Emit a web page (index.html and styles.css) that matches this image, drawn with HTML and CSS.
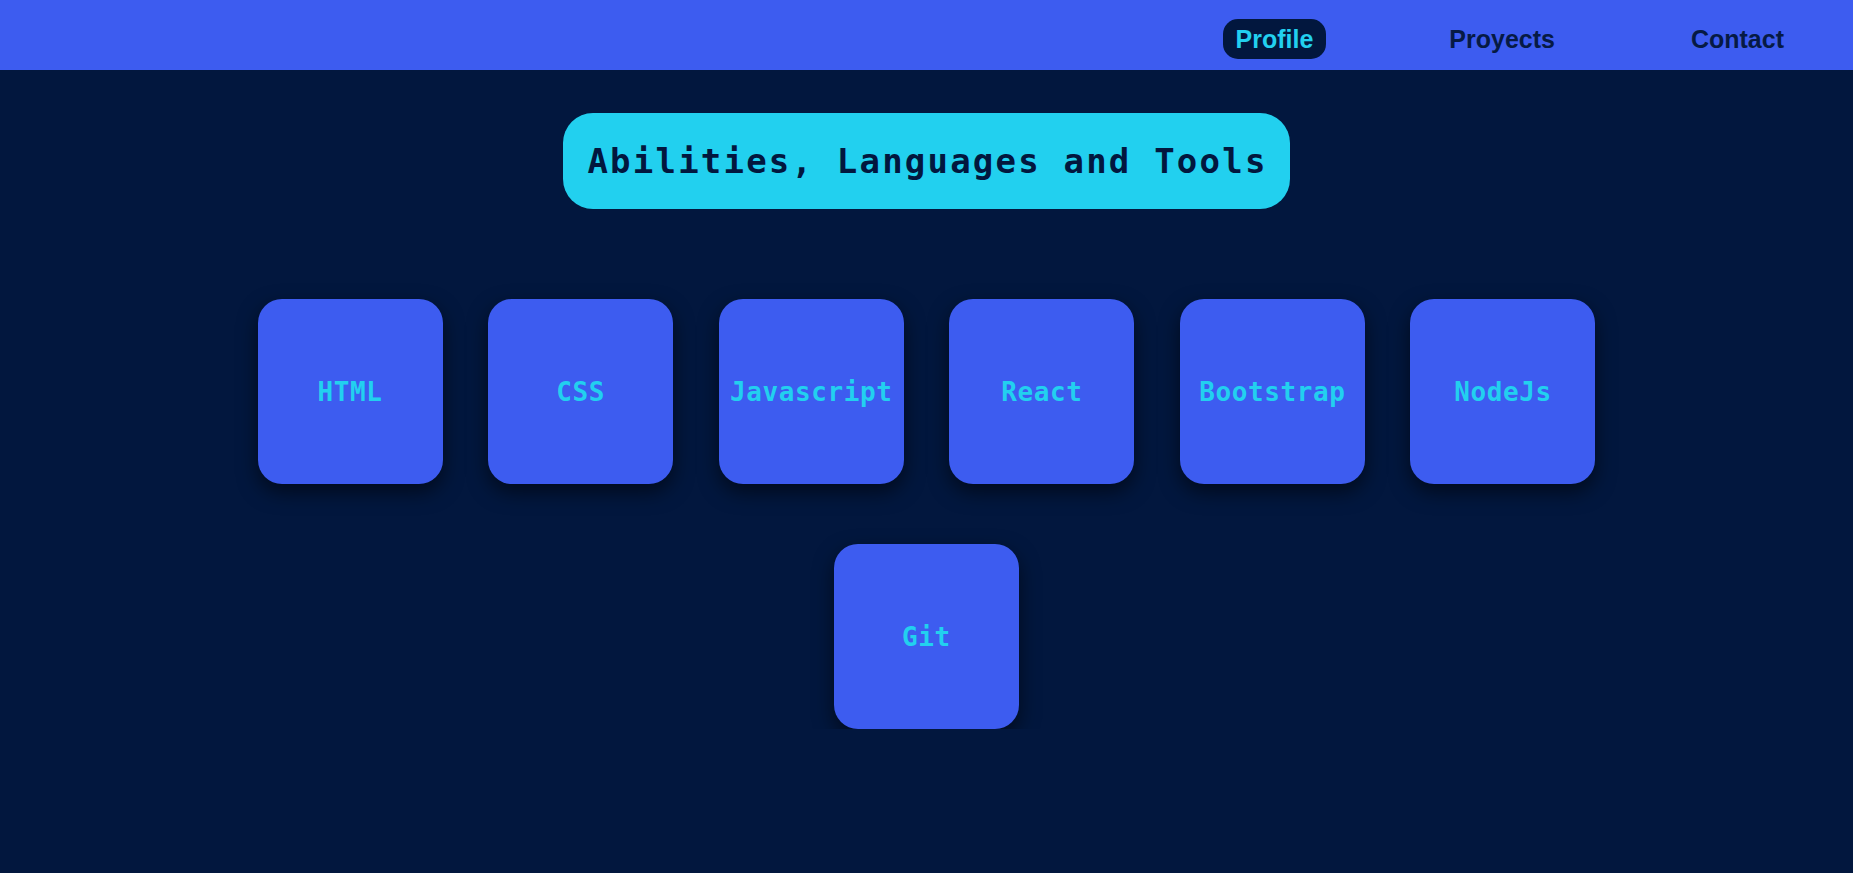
FILE: index.html
```html
<!DOCTYPE html>
<html lang="en">
<head>
<meta charset="utf-8">
<title>Abilities</title>
<link rel="stylesheet" href="styles.css">
</head>
<body>
<header class="topbar">
  <nav class="nav">
    <a class="nav-link active" href="#">Profile</a>
    <a class="nav-link" href="#">Proyects</a>
    <a class="nav-link" href="#">Contact</a>
  </nav>
</header>
<main class="main">
  <h1 class="title">Abilities, Languages and Tools</h1>
  <section class="skills">
    <div class="skill">HTML</div>
    <div class="skill">CSS</div>
    <div class="skill">Javascript</div>
    <div class="skill">React</div>
    <div class="skill">Bootstrap</div>
    <div class="skill">NodeJs</div>
    <div class="skill">Git</div>
  </section>
</main>
</body>
</html>
```
FILE: styles.css
```css
html, body {
  margin: 0;
  padding: 0;
  background: #02173e;
  min-height: 100%;
}

body {
  font-family: "Liberation Sans", Arial, sans-serif;
}

.topbar {
  height: 70px;
  background: #3d5cf0;
  box-sizing: border-box;
  padding-top: 8px;
  display: flex;
  align-items: center;
  justify-content: flex-end;
  padding-right: 56px;
}

.nav {
  display: flex;
  align-items: center;
  gap: 110px;
}

.nav-link {
  font-family: "Liberation Sans", Arial, sans-serif;
  font-weight: bold;
  font-size: 25px;
  line-height: 28px;
  padding: 6px 13px;
  border-radius: 15px;
  color: #061a44;
  text-decoration: none;
}

.nav-link.active {
  background: #02173e;
  color: #22d0ef;
}

.main {
  display: flex;
  flex-direction: column;
  align-items: center;
}

.title {
  margin: 43px 0 0;
  padding: 27px 22px 27px 24px;
  background: #22d0ef;
  color: #02173e;
  border-radius: 30px;
  font-family: "DejaVu Sans Mono", "Liberation Mono", monospace;
  font-weight: bold;
  font-size: 34px;
  line-height: 42px;
  letter-spacing: 2.2px;
}

.skills {
  margin-top: 90px;
  width: 1360px;
  display: flex;
  flex-wrap: wrap;
  justify-content: center;
  column-gap: 45.6px;
  row-gap: 60px;
}

.skill {
  width: 185px;
  height: 185px;
  border-radius: 24px;
  background: #3d5cf0;
  box-shadow: 0 8px 20px rgba(0, 0, 0, 0.55);
  display: flex;
  align-items: center;
  justify-content: center;
  font-family: "DejaVu Sans Mono", "Liberation Mono", monospace;
  font-weight: bold;
  font-size: 26px;
  letter-spacing: 0.6px;
  color: #22d0ef;
}
```
